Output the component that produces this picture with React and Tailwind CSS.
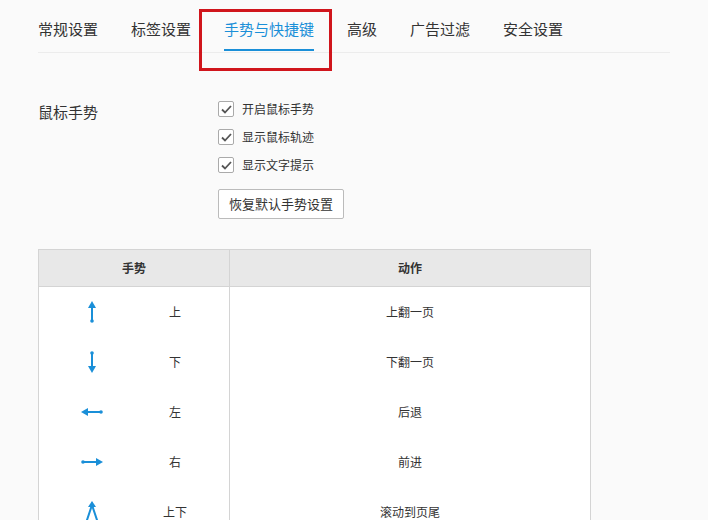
const F = { fontFamily: '"Microsoft YaHei","Noto Sans CJK SC",sans-serif' };

const Arrow = ({ dir }) => {
  const c = "#1a8fd8";
  const rot = { up: 0, down: 180, left: 270, right: 90 }[dir];
  if (dir === "updown")
    return (
      <svg width="16" height="22" viewBox="0 0 16 22">
        <path d="M2 22 L8 4 L14 22" fill="none" stroke={c} strokeWidth="2" />
        <path d="M4 6 L8 0 L12 6 Z" fill={c} />
      </svg>
    );
  return (
    <svg width="24" height="24" viewBox="0 0 24 24" style={{ transform: `rotate(${rot}deg)` }}>
      <line x1="12" y1="5" x2="12" y2="21" stroke={c} strokeWidth="2" />
      <path d="M8 8 L12 1 L16 8 Z" fill={c} />
      <circle cx="12" cy="21" r="1.8" fill={c} />
    </svg>
  );
};

const rows = [
  ["up", "上", "上翻一页"],
  ["down", "下", "下翻一页"],
  ["left", "左", "后退"],
  ["right", "右", "前进"],
  ["updown", "上下", "滚动到页尾"],
];

const Check = ({ label }) => (
  <label className="flex items-center gap-[8px] h-[28px] text-[12px] text-[#333]">
    <span className="w-[16px] h-[16px] border border-[#aaa] rounded-[2px] bg-white flex items-center justify-center">
      <svg width="11" height="9" viewBox="0 0 11 9">
        <path d="M1 4.5 L4 7.5 L10 1" fill="none" stroke="#555" strokeWidth="1.8" />
      </svg>
    </span>
    {label}
  </label>
);

export default function App() {
  const tabs = ["常规设置", "标签设置", "手势与快捷键", "高级", "广告过滤", "安全设置"];
  return (
    <div className="w-[708px] h-[520px] overflow-hidden bg-[#fafafa] relative" style={F}>
      <div className="mx-[38px] flex gap-[33px] border-b border-[#ececec] h-[53px]">
        {tabs.map((t, i) => (
          <div
            key={t}
            className={`pt-[18px] text-[15px] ${i === 2 ? "text-[#1a8fd8] border-b-2 border-[#1a8fd8] h-[51px]" : "text-[#333]"}`}
          >
            {t}
          </div>
        ))}
      </div>
      <div className="absolute left-[199px] top-[9px] w-[133px] h-[62px] border-[3px] border-[#d0151c]" />
      <div className="flex pl-[38px] pt-[42px]">
        <div className="w-[180px] text-[15px] text-[#333] pt-[6px]">鼠标手势</div>
        <div>
          <Check label="开启鼠标手势" />
          <Check label="显示鼠标轨迹" />
          <Check label="显示文字提示" />
          <button className="mt-[10px] h-[30px] px-[10px] border border-[#bbb] rounded-[2px] bg-white text-[13px] text-[#333]">
            恢复默认手势设置
          </button>
        </div>
      </div>
      <div className="ml-[38px] mt-[30px] w-[553px] border border-[#d4d4d4] bg-white">
        <div className="flex h-[37px] bg-[#e8e8e8] border-b border-[#d4d4d4] text-[12px] font-bold text-[#333] items-center">
          <div className="w-[191px] text-center border-r border-[#d4d4d4] h-full flex items-center justify-center">手势</div>
          <div className="flex-1 text-center">动作</div>
        </div>
        {rows.map(([d, g, a]) => (
          <div key={g} className="flex h-[50px] text-[12px] text-[#333]">
            <div className="w-[191px] border-r border-[#d4d4d4] flex items-center">
              <div className="w-[106px] flex justify-center">
                <Arrow dir={d} />
              </div>
              <div className="w-[60px] text-center">{g}</div>
            </div>
            <div className="flex-1 flex items-center justify-center">{a}</div>
          </div>
        ))}
      </div>
    </div>
  );
}
